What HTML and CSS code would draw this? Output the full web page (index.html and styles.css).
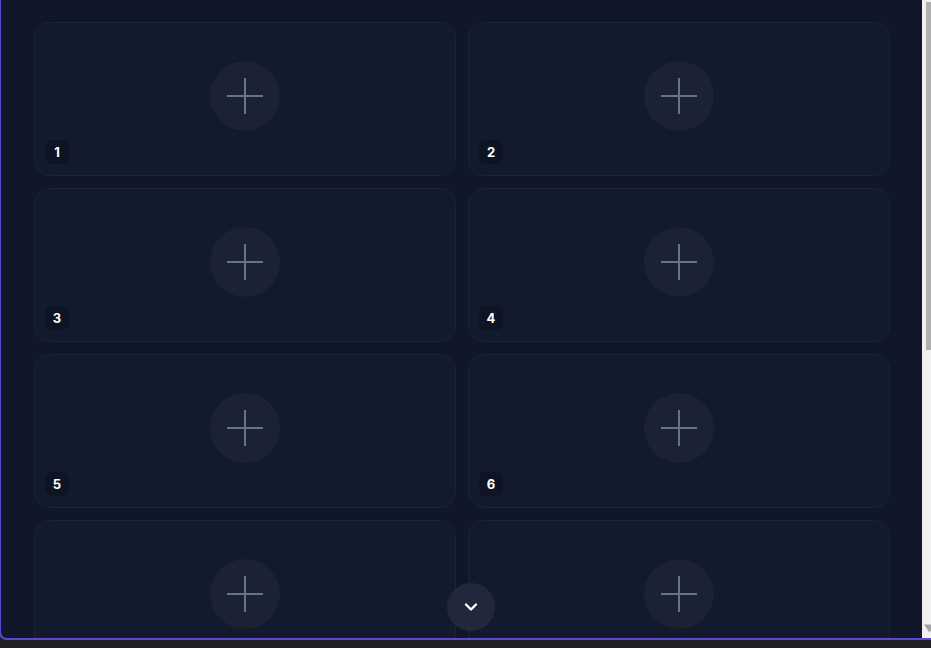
FILE: index.html
```html
<!DOCTYPE html>
<html>
<head>
<meta charset="utf-8">
<link rel="stylesheet" href="styles.css">
</head>
<body>
<div class="panel">
  <div class="scroller">
    <div class="grid">
      <div class="slot"><div class="add"><svg viewBox="0 0 36 36" width="36" height="36"><path d="M18 0V36M0 18H36" stroke="#64748b" stroke-width="2"/></svg></div><span class="num">1</span></div>
      <div class="slot"><div class="add"><svg viewBox="0 0 36 36" width="36" height="36"><path d="M18 0V36M0 18H36" stroke="#64748b" stroke-width="2"/></svg></div><span class="num">2</span></div>
      <div class="slot"><div class="add"><svg viewBox="0 0 36 36" width="36" height="36"><path d="M18 0V36M0 18H36" stroke="#64748b" stroke-width="2"/></svg></div><span class="num">3</span></div>
      <div class="slot"><div class="add"><svg viewBox="0 0 36 36" width="36" height="36"><path d="M18 0V36M0 18H36" stroke="#64748b" stroke-width="2"/></svg></div><span class="num">4</span></div>
      <div class="slot"><div class="add"><svg viewBox="0 0 36 36" width="36" height="36"><path d="M18 0V36M0 18H36" stroke="#64748b" stroke-width="2"/></svg></div><span class="num">5</span></div>
      <div class="slot"><div class="add"><svg viewBox="0 0 36 36" width="36" height="36"><path d="M18 0V36M0 18H36" stroke="#64748b" stroke-width="2"/></svg></div><span class="num">6</span></div>
      <div class="slot"><div class="add"><svg viewBox="0 0 36 36" width="36" height="36"><path d="M18 0V36M0 18H36" stroke="#64748b" stroke-width="2"/></svg></div><span class="num">7</span></div>
      <div class="slot"><div class="add"><svg viewBox="0 0 36 36" width="36" height="36"><path d="M18 0V36M0 18H36" stroke="#64748b" stroke-width="2"/></svg></div><span class="num">8</span></div>
    </div>
  </div>
  <div class="bar">
    <div class="bar-btn"><svg viewBox="0 0 15 15" width="15" height="15"><path d="M2.5 11L7.5 4L12.5 11Z" fill="#a3a3a3"/></svg></div>
    <div class="bar-track"><div class="bar-thumb"></div></div>
    <div class="bar-btn"><svg viewBox="0 0 15 15" width="15" height="15"><path d="M2 1.5H13L7.5 9.5Z" fill="#a3a3a3"/></svg></div>
  </div>
  <button class="more" type="button"><svg viewBox="0 0 14 10" width="14" height="10"><path d="M2 2.5L7 7.5L12 2.5" fill="none" stroke="#ffffff" stroke-width="2.4" stroke-linecap="round" stroke-linejoin="round"/></svg></button>
</div>
</body>
</html>
```

FILE: styles.css
```css
html, body {
  margin: 0;
  padding: 0;
  overflow: hidden;
  height: 100%;
}

body {
  background: #202024;
  font-family: Inter, "Noto Sans", sans-serif;
}

.panel {
  position: relative;
  display: flex;
  width: 936px;
  height: 653px;
  margin: -15px 0 0 -1px;
  border: 2px solid #6046d6;
  border-top: none;
  border-radius: 0 0 8px 8px;
  background: #0f1729;
  box-sizing: content-box;
  overflow: hidden;
}

.scroller {
  flex: 1;
  min-width: 0;
  overflow: hidden;
}

.bar {
  flex: none;
  width: 15px;
  display: flex;
  flex-direction: column;
  background: #f1f1f1;
}

.bar-btn {
  flex: none;
  height: 15px;
  display: flex;
}

.bar-track {
  flex: 1;
  padding: 2px 2px 0 4px;
}

.bar-thumb {
  height: 348px;
  background: #b0b0b0;
}

.grid {
  display: grid;
  grid-template-columns: 422px 422px;
  grid-auto-rows: 154px;
  gap: 12px;
  padding: 37px 32px 0 33px;
}

.slot {
  position: relative;
  display: flex;
  justify-content: center;
  align-items: flex-start;
  padding-top: 38px;
  box-sizing: border-box;
  background: #121a2d;
  border: 1px solid #1b2437;
  border-radius: 16px;
}

.add {
  width: 70px;
  height: 70px;
  border-radius: 50%;
  background: #1a2233;
  display: flex;
  align-items: center;
  justify-content: center;
}

.num {
  position: absolute;
  left: 10px;
  bottom: 11px;
  min-width: 24px;
  height: 24px;
  padding: 0 4px;
  box-sizing: border-box;
  border-radius: 7px;
  background: #0e1424;
  color: #ffffff;
  font-size: 13px;
  font-weight: 700;
  line-height: 24px;
  text-align: center;
}

.more {
  position: absolute;
  left: 446px;
  bottom: 7px;
  width: 48px;
  height: 48px;
  border: none;
  border-radius: 50%;
  background: rgba(36, 44, 62, 0.85);
  display: flex;
  align-items: center;
  justify-content: center;
  padding: 0;
}
```
